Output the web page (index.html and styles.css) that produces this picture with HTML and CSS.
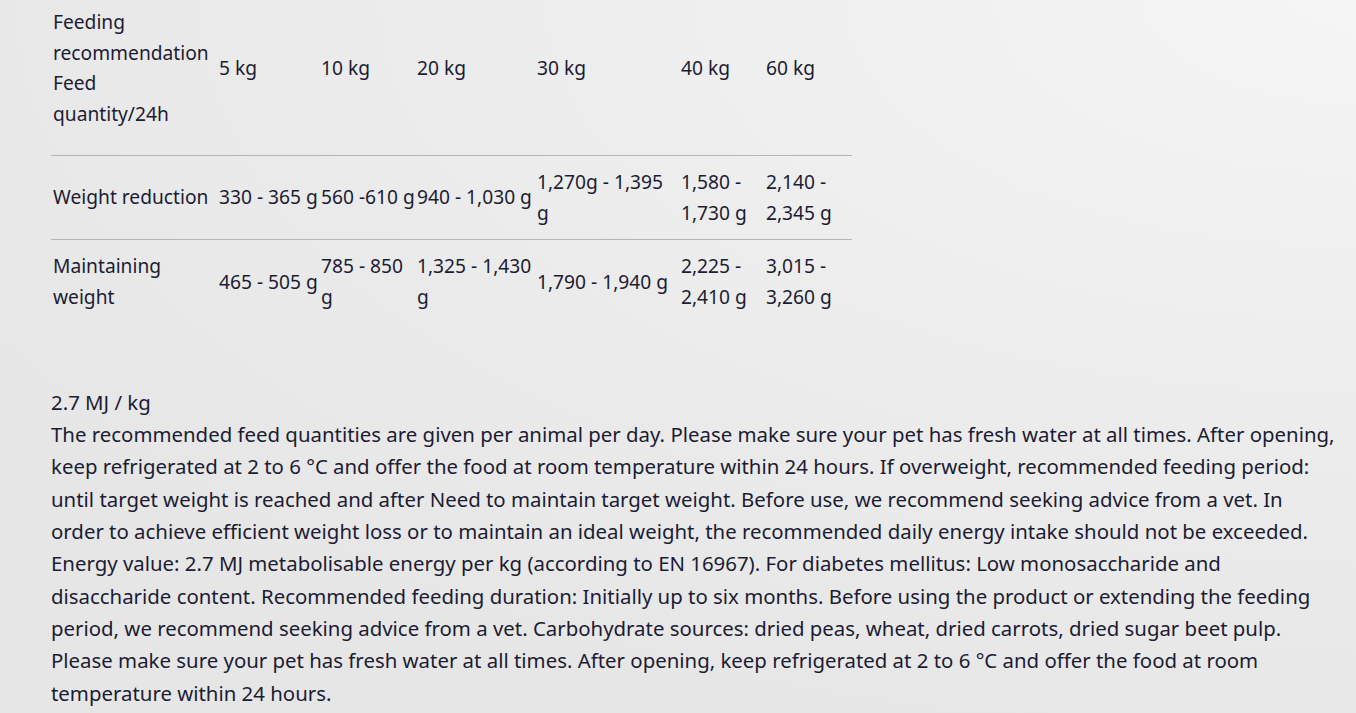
FILE: index.html
```html
<!DOCTYPE html>
<html lang="en">
<head>
<meta charset="utf-8">
<title>Feeding recommendation</title>
<link rel="stylesheet" href="styles.css">
</head>
<body>
<main class="content">
  <table class="feed-table">
    <colgroup>
      <col class="c1"><col class="c2"><col class="c3"><col class="c4"><col class="c5"><col class="c6"><col class="c7">
    </colgroup>
    <thead>
      <tr>
        <th>Feeding recommendation Feed quantity/24h</th>
        <th>5 kg</th>
        <th>10 kg</th>
        <th>20 kg</th>
        <th>30 kg</th>
        <th>40 kg</th>
        <th>60 kg</th>
      </tr>
    </thead>
    <tbody>
      <tr>
        <td>Weight reduction</td>
        <td>330 - 365 g</td>
        <td>560 -610 g</td>
        <td>940 - 1,030 g</td>
        <td>1,270g - 1,395 g</td>
        <td>1,580 - 1,730 g</td>
        <td>2,140 - 2,345 g</td>
      </tr>
      <tr>
        <td>Maintaining weight</td>
        <td>465 - 505 g</td>
        <td>785 - 850 g</td>
        <td>1,325 - 1,430 g</td>
        <td>1,790 - 1,940 g</td>
        <td>2,225 - 2,410 g</td>
        <td>3,015 - 3,260 g</td>
      </tr>
    </tbody>
  </table>

  <section class="notes">
    <div class="energy">2.7 MJ / kg</div>
    <p class="text">The recommended feed quantities are given per animal per day. Please make sure your pet has fresh water at all times. After opening, keep refrigerated at 2 to 6 °C and offer the food at room temperature within 24 hours. If overweight, recommended feeding period: until target weight is reached and after Need to maintain target weight. Before use, we recommend seeking advice from a vet. In order to achieve efficient weight loss or to maintain an ideal weight, the recommended daily energy intake should not be exceeded. Energy value: 2.7 MJ metabolisable energy per kg (according to EN 16967). For diabetes mellitus: Low monosaccharide and disaccharide content. Recommended feeding duration: Initially up to six months. Before using the product or extending the feeding period, we recommend seeking advice from a vet. Carbohydrate sources: dried peas, wheat, dried carrots, dried sugar beet pulp. Please make sure your pet has fresh water at all times. After opening, keep refrigerated at 2 to 6 °C and offer the food at room temperature within 24 hours.</p>
  </section>
</main>
</body>
</html>
```
FILE: styles.css
```css
html, body {
  margin: 0;
  padding: 0;
  height: 100%;
}

body {
  background: radial-gradient(ellipse 120% 110% at 100% 0%, #f5f5f5 0%, #ececec 55%, #e6e6e6 100%);
  font-family: "Noto Sans", "Open Sans", sans-serif;
  color: #1c1c33;
  overflow: hidden;
}

.content {
  padding: 7px 20px 0 51px;
}

.feed-table {
  border-collapse: collapse;
  table-layout: fixed;
  width: 801px;
  font-size: 19.2px;
  line-height: 30.7px;
}

.c1 { width: 166px; }
.c2 { width: 102px; }
.c3 { width: 96px; }
.c4 { width: 120px; }
.c5 { width: 144px; }
.c6 { width: 85px; }
.c7 { width: 88px; }

.feed-table th,
.feed-table td {
  font-weight: normal;
  text-align: left;
  vertical-align: middle;
  padding: 11px 0 11px 2px;
}

.feed-table th {
  padding-top: 0;
  padding-bottom: 25px;
}

.feed-table tbody tr {
  border-top: 1px solid #b5b5b5;
}

.notes {
  margin-top: 62px;
  width: 1284px;
  font-size: 20.4px;
  line-height: 32.33px;
}

.energy {
  margin: 0;
}

.text {
  margin: 0;
}
```
